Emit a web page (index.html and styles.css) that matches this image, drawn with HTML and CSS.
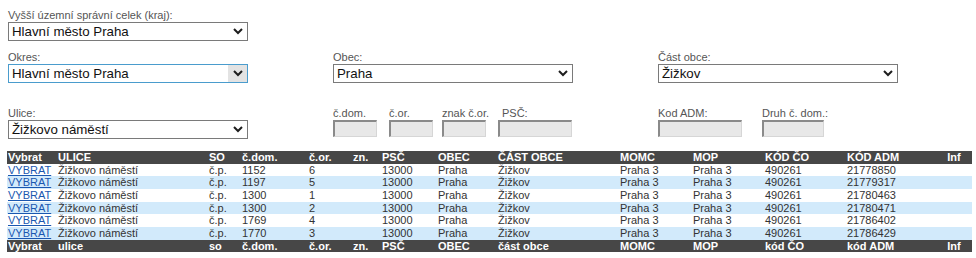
FILE: index.html
```html
<!DOCTYPE html>
<html lang="cs">
<head>
<meta charset="utf-8">
<title>Vyhledání adresy</title>
<link rel="stylesheet" href="styles.css">
</head>
<body>
<div class="form">
  <div class="row">
    <div class="field">
      <label class="lbl">Vyšší územní správní celek (kraj):</label>
      <div class="sel"><span class="val">Hlavní město Praha</span><span class="arrow"><svg width="10" height="7" viewBox="0 0 10 7"><polyline points="1,1 5,5 9,1" fill="none" stroke="#1e1e1e" stroke-width="2"/></svg></span></div>
    </div>
  </div>
  <div class="row grid3 r2">
    <div class="field">
      <label class="lbl">Okres:</label>
      <div class="sel focus"><span class="val">Hlavní město Praha</span><span class="arrow hover"><svg width="10" height="7" viewBox="0 0 10 7"><polyline points="1,1 5,5 9,1" fill="none" stroke="#1e1e1e" stroke-width="2"/></svg></span></div>
    </div>
    <div class="field">
      <label class="lbl">Obec:</label>
      <div class="sel"><span class="val">Praha</span><span class="arrow"><svg width="10" height="7" viewBox="0 0 10 7"><polyline points="1,1 5,5 9,1" fill="none" stroke="#1e1e1e" stroke-width="2"/></svg></span></div>
    </div>
    <div class="field">
      <label class="lbl">Část obce:</label>
      <div class="sel"><span class="val">Žižkov</span><span class="arrow"><svg width="10" height="7" viewBox="0 0 10 7"><polyline points="1,1 5,5 9,1" fill="none" stroke="#1e1e1e" stroke-width="2"/></svg></span></div>
    </div>
  </div>
  <div class="row grid3 r3">
    <div class="field">
      <label class="lbl">Ulice:</label>
      <div class="sel"><span class="val">Žižkovo náměstí</span><span class="arrow"><svg width="10" height="7" viewBox="0 0 10 7"><polyline points="1,1 5,5 9,1" fill="none" stroke="#1e1e1e" stroke-width="2"/></svg></span></div>
    </div>
    <div class="subs">
      <div class="sub w56"><label class="lbl">č.dom.</label><input class="inp i44" type="text"></div>
      <div class="sub w53"><label class="lbl">č.or.</label><input class="inp i44" type="text"></div>
      <div class="sub w56"><label class="lbl">znak č.or.</label><input class="inp i44" type="text"></div>
      <div class="sub"><label class="lbl psc">PSČ:</label><input class="inp i74" type="text"></div>
    </div>
    <div class="subs">
      <div class="sub w104"><label class="lbl">Kod ADM:</label><input class="inp i84" type="text"></div>
      <div class="sub"><label class="lbl">Druh č. dom.:</label><input class="inp i62" type="text"></div>
    </div>
  </div>
</div>
<table class="res">
  <colgroup>
    <col class="c50"><col class="c151"><col class="c33"><col class="c67"><col class="c44"><col class="c29"><col class="c56"><col class="c60"><col class="c122"><col class="c73"><col class="c72"><col class="c82"><col class="c89"><col class="c37">
  </colgroup>
  <thead>
    <tr><th>Vybrat</th><th>ULICE</th><th>SO</th><th>č.dom.</th><th>č.or.</th><th>zn.</th><th>PSČ</th><th>OBEC</th><th>ČÁST OBCE</th><th>MOMC</th><th>MOP</th><th>KÓD ČO</th><th>KÓD ADM</th><th class="ctr">Inf</th></tr>
  </thead>
  <tbody>
    <tr><td><a href="#">VYBRAT</a></td><td>Žižkovo náměstí</td><td>č.p.</td><td>1152</td><td>6</td><td></td><td>13000</td><td>Praha</td><td>Žižkov</td><td>Praha 3</td><td>Praha 3</td><td>490261</td><td>21778850</td><td></td></tr>
    <tr class="alt"><td><a href="#">VYBRAT</a></td><td>Žižkovo náměstí</td><td>č.p.</td><td>1197</td><td>5</td><td></td><td>13000</td><td>Praha</td><td>Žižkov</td><td>Praha 3</td><td>Praha 3</td><td>490261</td><td>21779317</td><td></td></tr>
    <tr><td><a href="#">VYBRAT</a></td><td>Žižkovo náměstí</td><td>č.p.</td><td>1300</td><td>1</td><td></td><td>13000</td><td>Praha</td><td>Žižkov</td><td>Praha 3</td><td>Praha 3</td><td>490261</td><td>21780463</td><td></td></tr>
    <tr class="alt"><td><a href="#">VYBRAT</a></td><td>Žižkovo náměstí</td><td>č.p.</td><td>1300</td><td>2</td><td></td><td>13000</td><td>Praha</td><td>Žižkov</td><td>Praha 3</td><td>Praha 3</td><td>490261</td><td>21780471</td><td></td></tr>
    <tr><td><a href="#">VYBRAT</a></td><td>Žižkovo náměstí</td><td>č.p.</td><td>1769</td><td>4</td><td></td><td>13000</td><td>Praha</td><td>Žižkov</td><td>Praha 3</td><td>Praha 3</td><td>490261</td><td>21786402</td><td></td></tr>
    <tr class="alt"><td><a href="#">VYBRAT</a></td><td>Žižkovo náměstí</td><td>č.p.</td><td>1770</td><td>3</td><td></td><td>13000</td><td>Praha</td><td>Žižkov</td><td>Praha 3</td><td>Praha 3</td><td>490261</td><td>21786429</td><td></td></tr>
  </tbody>
  <tfoot>
    <tr><th>Vybrat</th><th>ulice</th><th>so</th><th>č.dom.</th><th>č.or.</th><th>zn.</th><th>PSČ</th><th>OBEC</th><th>část obce</th><th>MOMC</th><th>MOP</th><th>kód ČO</th><th>kód ADM</th><th class="ctr">Inf</th></tr>
  </tfoot>
</table>
</body>
</html>
```
FILE: styles.css
```css
html, body { margin: 0; padding: 0; background: #fff; }
body {
  padding: 9px 0 0 8px;
  font-family: "Liberation Sans", Arial, sans-serif;
  color: #333;
}
.form { display: flex; flex-direction: column; }
.row { display: flex; }
.grid3 { display: grid; grid-template-columns: 325px 325px 325px; }
.r2 { margin-top: 10px; }
.r3 { margin-top: 24px; }
.field { display: flex; flex-direction: column; }
.lbl {
  display: block;
  font-size: 11px;
  line-height: 13px;
  height: 13px;
  color: #555;
  white-space: nowrap;
}
.sel {
  box-sizing: border-box;
  width: 240px;
  height: 19px;
  border: 1px solid #7a7a7a;
  background: #fff;
  display: flex;
  align-items: center;
  justify-content: space-between;
}
.sel.focus { border-color: #4a9ccd; }
.val {
  font-size: 13.3px;
  line-height: 17px;
  color: #111;
  padding-left: 3px;
  white-space: nowrap;
}
.arrow {
  width: 19px;
  height: 17px;
  display: flex;
  align-items: center;
  justify-content: center;
}
.arrow.hover { background: #e3e3e3; }
.arrow svg { display: block; }
.subs { display: flex; }
.sub { display: flex; flex-direction: column; }
.w56 { width: 56px; }
.w53 { width: 53px; }
.w104 { width: 104px; }
.psc { padding-left: 4px; }
.inp {
  box-sizing: border-box;
  height: 17px;
  margin: 0;
  padding: 0;
  background: #e8e8e8;
  border-style: solid;
  border-width: 2px 1px 1px 2px;
  border-color: #8a8a8a #d6d6d6 #d6d6d6 #8a8a8a;
}
.i44 { width: 44px; }
.i74 { width: 74px; }
.i84 { width: 84px; }
.i62 { width: 62px; }

.res {
  margin: 12px 0 0 -1px;
  width: 965px;
  table-layout: fixed;
  border-collapse: collapse;
  font-size: 11px;
  font-family: "Liberation Sans", Arial, sans-serif;
}
.c50 { width: 50px; } .c151 { width: 151px; } .c33 { width: 33px; } .c67 { width: 67px; }
.c44 { width: 44px; } .c29 { width: 29px; } .c56 { width: 56px; } .c60 { width: 60px; }
.c122 { width: 122px; } .c73 { width: 73px; } .c72 { width: 72px; } .c82 { width: 82px; }
.c89 { width: 89px; } .c37 { width: 37px; }
.res th, .res td {
  padding: 0 0 0 1px;
  text-align: left;
  white-space: nowrap;
  overflow: hidden;
  line-height: 12.65px;
}
.res th { background: #474747; color: #fff; font-weight: bold; }
.res th.ctr { text-align: center; }
.res td { color: #333; }
.res tr.alt td { background: #d2eafb; }
.res a { color: #1a57b0; text-decoration: underline; }
```
